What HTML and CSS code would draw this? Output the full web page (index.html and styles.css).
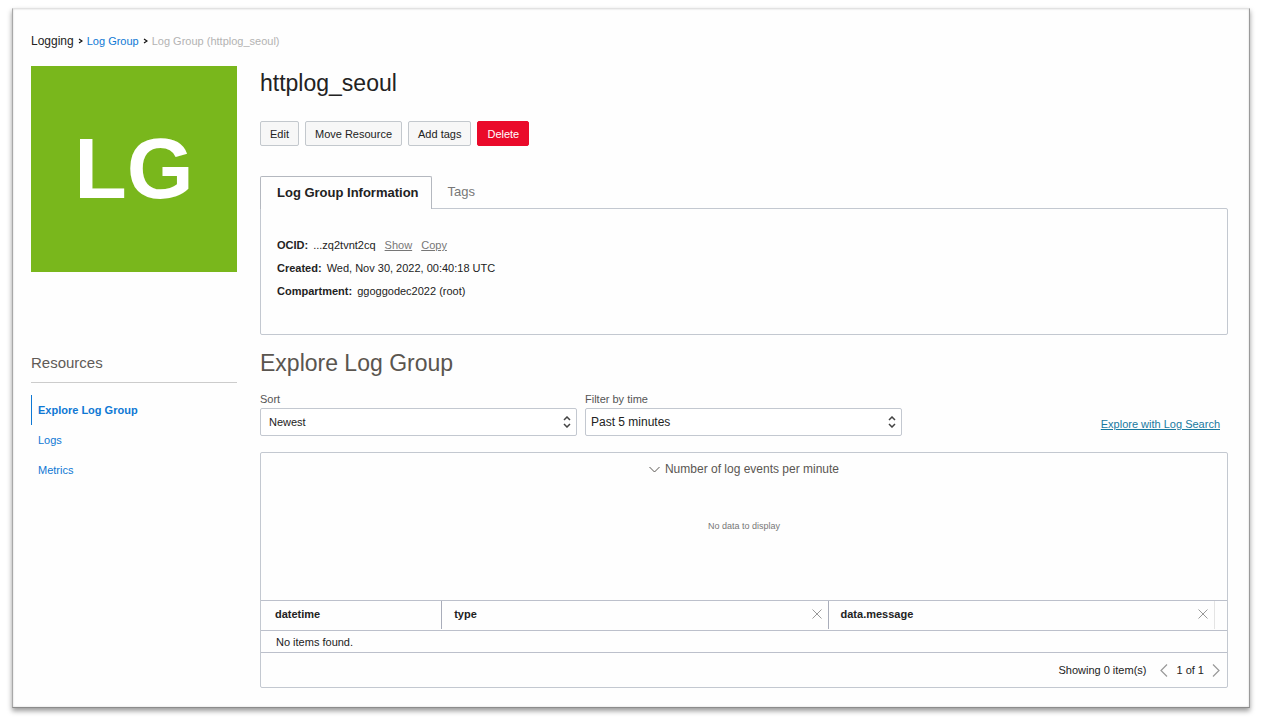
FILE: index.html
```html
<!DOCTYPE html>
<html lang="en">
<head>
<meta charset="utf-8">
<meta name="viewport" content="width=device-width, initial-scale=1">
<title>httplog_seoul - Log Group</title>
<link rel="stylesheet" href="styles.css">
</head>
<body>
<div class="page">
  <nav class="breadcrumb" aria-label="Breadcrumb">
    <span class="crumb-root">Logging</span>
    <svg class="crumb-arrow" viewBox="0 0 5 6" aria-hidden="true"><path d="M1 1l3 2-3 2"/></svg>
    <a href="#">Log Group</a>
    <svg class="crumb-arrow" viewBox="0 0 5 6" aria-hidden="true"><path d="M1 1l3 2-3 2"/></svg>
    <span class="crumb-current">Log Group (httplog_seoul)</span>
  </nav>

  <div class="layout">
    <div class="avatar">LG</div>

    <header class="summary">
      <h1 class="title">httplog_seoul</h1>
      <div class="actions">
        <button type="button" class="btn">Edit</button>
        <button type="button" class="btn">Move Resource</button>
        <button type="button" class="btn">Add tags</button>
        <button type="button" class="btn btn-danger">Delete</button>
      </div>
      <div class="tabs" role="tablist">
        <button type="button" class="tab tab-active" role="tab" aria-selected="true">Log Group Information</button>
        <button type="button" class="tab" role="tab" aria-selected="false">Tags</button>
      </div>
      <div class="info-panel" role="tabpanel">
        <dl class="facts">
          <div class="fact"><dt>OCID:</dt><dd>...zq2tvnt2cq <a href="#" class="fact-link">Show</a> <a href="#" class="fact-link">Copy</a></dd></div>
          <div class="fact"><dt>Created:</dt><dd>Wed, Nov 30, 2022, 00:40:18 UTC</dd></div>
          <div class="fact"><dt>Compartment:</dt><dd>ggoggodec2022 (root)</dd></div>
        </dl>
      </div>
    </header>

    <aside class="resources">
      <h2 class="resources-title">Resources</h2>
      <ul class="resource-list">
        <li><a href="#" class="resource resource-active">Explore Log Group</a></li>
        <li><a href="#" class="resource">Logs</a></li>
        <li><a href="#" class="resource">Metrics</a></li>
      </ul>
    </aside>

    <main class="explore">
      <h2 class="section-title">Explore Log Group</h2>
      <div class="filters">
        <div class="field">
          <label for="sort">Sort</label>
          <div class="select-wrap">
            <select id="sort"><option>Newest</option><option>Oldest</option></select>
            <svg class="select-icon" viewBox="0 0 8 12" aria-hidden="true"><path d="M1 4l3-3 3 3M1 8l3 3 3-3"/></svg>
          </div>
        </div>
        <div class="field field-time">
          <label for="time">Filter by time</label>
          <div class="select-wrap">
            <select id="time"><option>Past 5 minutes</option><option>Past 15 minutes</option></select>
            <svg class="select-icon" viewBox="0 0 8 12" aria-hidden="true"><path d="M1 4l3-3 3 3M1 8l3 3 3-3"/></svg>
          </div>
        </div>
        <a href="#" class="search-link">Explore with Log Search</a>
      </div>

      <div class="results">
        <section class="chart">
          <button type="button" class="chart-toggle">
            <svg class="toggle-icon" viewBox="0 0 11 7" aria-hidden="true"><path d="M.5 1l5 5 5-5"/></svg>
            Number of log events per minute
          </button>
          <p class="chart-empty">No data to display</p>
        </section>
        <table class="log-table">
          <colgroup><col class="col-date"><col class="col-wide"><col class="col-wide"><col></colgroup>
          <thead>
            <tr>
              <th scope="col"><div class="head-cell">datetime</div></th>
              <th scope="col"><div class="head-cell">type
                <button type="button" class="icon-btn" aria-label="Remove type column"><svg class="close-icon" viewBox="0 0 10 10" aria-hidden="true"><path d="M.5.5l9 9M9.500.5l-9 9"/></svg></button></div></th>
              <th scope="col"><div class="head-cell head-last">data.message
                <button type="button" class="icon-btn" aria-label="Remove data.message column"><svg class="close-icon" viewBox="0 0 10 10" aria-hidden="true"><path d="M.5.5l9 9M9.500.5l-9 9"/></svg></button></div></th>
              <td></td>
            </tr>
          </thead>
          <tbody>
            <tr><td class="empty-row" colspan="4">No items found.</td></tr>
          </tbody>
        </table>
        <div class="table-footer">
          <span>Showing 0 item(s)</span>
          <div class="pager">
            <button type="button" class="icon-btn" aria-label="Previous page"><svg class="page-icon" viewBox="0 0 8 13" aria-hidden="true"><path d="M7 .5l-6 6 6 6"/></svg></button>
            <span>1 of 1</span>
            <button type="button" class="icon-btn" aria-label="Next page"><svg class="page-icon" viewBox="0 0 8 13" aria-hidden="true"><path d="M1 .5l6 6-6 6"/></svg></button>
          </div>
        </div>
      </div>
    </main>
  </div>
</div>
</body>
</html>
```

FILE: styles.css
```css
* { box-sizing: border-box; }

body {
  margin: 0;
  background: #fff;
  color: #222;
  font-family: "Liberation Sans", Arial, sans-serif;
  font-size: 11px;
  line-height: 16px;
}

h1, h2, p, dl, dd, ul { margin: 0; padding: 0; font-weight: 400; }
ul { list-style: none; }
button, select { font: inherit; color: inherit; }
button { cursor: pointer; }
a { color: #0f78d4; text-decoration: none; }
svg { display: block; fill: none; stroke: currentColor; }

.page {
  margin: 8px 12px 14px;
  padding: 24px 21px 19px 18px;
  background: #fefefe;
  border: 1px solid;
  border-color: #e2e2e2 #9a9a9a #8c8c8c #a8a8a8;
  box-shadow: 0 3px 5px rgba(0, 0, 0, .4), inset 0 0 2px rgba(0, 0, 0, .2);
}

.breadcrumb { display: flex; align-items: center; gap: 4px; }
.crumb-root { font-size: 12px; }
.crumb-arrow { width: 5px; height: 6px; stroke: #111; stroke-width: 1.3; }
.crumb-current { color: #b3b3b3; }

.layout {
  display: grid;
  grid-template-columns: 206px minmax(0, 1fr);
  gap: 14px 23px;
  margin-top: 17px;
}

.avatar {
  display: grid;
  place-items: center;
  align-self: start;
  aspect-ratio: 1;
  padding-bottom: 2px;
  background: #79b71c;
  color: #fff;
  font-size: 86px;
  font-weight: 700;
  line-height: 1;
}

.title { font-size: 23px; line-height: 34px; }
.actions { display: flex; gap: 6px; margin-top: 21px; }
.btn {
  height: 25px;
  padding: 0 9px;
  border: 1px solid #c3c8cd;
  border-radius: 2px;
  background: #f7f7f7;
  white-space: nowrap;
}
.btn-danger { border-color: #ea0a2a; background: #ea0a2a; color: #fff; }

.tabs { display: flex; margin-top: 30px; }
.tab {
  height: 32px;
  padding: 0 16px;
  border: 0;
  background: none;
  color: #777;
  font-size: 13px;
}
.tab-active {
  position: relative;
  height: 33px;
  margin-bottom: -1px;
  padding-right: 12px;
  border: 1px solid #b4b8bf;
  border-bottom: 0;
  border-radius: 2px 2px 0 0;
  background: #fefefe;
  color: #222;
  font-weight: 700;
}

.info-panel {
  padding: 25px 16px 31px;
  border: 1px solid #c3c8d0;
  border-radius: 0 2px 2px 2px;
}
.fact { display: flex; gap: 5px; line-height: 23px; }
.fact dt { font-weight: 700; }
.fact-link { margin-left: 6px; color: #777; text-decoration: underline; }

.resources-title {
  padding-bottom: 5px;
  border-bottom: 1px solid #ccc;
  color: #5f5b57;
  font-size: 15px;
  line-height: 28px;
}
.resource-list { margin-top: 12px; }
.resource { display: block; padding-left: 7px; line-height: 30px; }
.resource-active {
  padding-left: 6px;
  border-left: 1px solid #0f78d4;
  font-weight: 700;
}

.section-title { color: #5a554f; font-size: 23px; line-height: 28px; }
.filters { display: flex; align-items: flex-end; gap: 8px; margin-top: 14px; }
.field { flex: 0 1 317px; color: #555; }
.field label { display: block; line-height: 17px; }
.select-wrap { position: relative; }
.select-wrap select {
  display: block;
  width: 100%;
  height: 28px;
  padding: 0 24px 0 8px;
  border: 1px solid #c3c8d0;
  border-radius: 2px;
  appearance: none;
  background: #fff;
  color: #222;
}
.field-time select { padding-left: 5px; font-size: 12px; }
.select-icon {
  position: absolute;
  top: 8px;
  right: 6px;
  width: 8px;
  height: 12px;
  stroke: #444;
  stroke-width: 1.5;
  pointer-events: none;
}
.search-link {
  margin: 0 8px 4px auto;
  color: #19799f;
  text-decoration: underline;
}

.results {
  margin-top: 16px;
  border: 1px solid #c3c8d0;
  border-radius: 2px;
}
.chart {
  display: flex;
  flex-direction: column;
  align-items: center;
  min-height: 147px;
  padding-top: 8px;
}
.chart-toggle {
  display: flex;
  align-items: center;
  gap: 5px;
  padding: 0;
  border: 0;
  background: none;
  color: #5a5652;
  font-size: 12px;
}
.toggle-icon { width: 11px; height: 7px; }
.chart-empty { margin-top: 41px; color: #777; font-size: 9px; }

.log-table { width: 100%; table-layout: fixed; border-collapse: separate; border-spacing: 0; }
.col-date { width: 18.75%; }
.col-wide { width: 40%; }
.log-table th, .log-table td {
  height: 31px;
  padding: 0;
  border: solid #bcc0cb;
  border-width: 1px 0;
  text-align: left;
  vertical-align: top;
}
.head-cell {
  display: flex;
  align-items: center;
  justify-content: space-between;
  height: 28px;
  padding: 0 6px 2px 12px;
  border-right: 1px solid #a9adba;
}
.head-last { border-right-color: #e4e4e4; }
th:first-child .head-cell { padding-left: 14px; }
.log-table .empty-row { height: 22px; padding: 3px 15px 2px; border-top: 0; }

.icon-btn { padding: 0; border: 0; background: none; color: #999; }
.close-icon { width: 10px; height: 10px; }
.page-icon { width: 8px; height: 13px; stroke-width: 1.2; }
.table-footer {
  display: flex;
  align-items: center;
  justify-content: flex-end;
  gap: 14px;
  height: 34px;
  padding-right: 7px;
}
.pager { display: flex; align-items: center; gap: 8px; }
```
